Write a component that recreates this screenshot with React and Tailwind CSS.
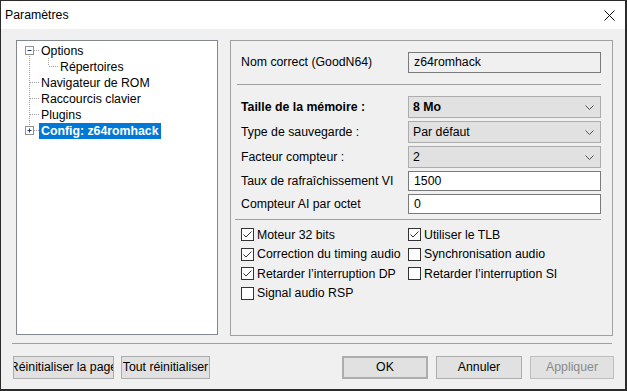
import React from "react";

function Check({ checked }) {
  return (
    <span className="w-[13px] h-[13px] border border-[#333333] bg-white flex items-center justify-center shrink-0">
      {checked && (
        <svg width="11" height="11" viewBox="0 0 11 11">
          <path d="M1.5 5.5 L4 8 L9.5 2.5" fill="none" stroke="#333333" strokeWidth="1" />
        </svg>
      )}
    </span>
  );
}

function CheckItem({ checked, label }) {
  return (
    <div className="flex items-center h-[19.5px]">
      <Check checked={checked} />
      <span className="ml-[3px] whitespace-nowrap">{label}</span>
    </div>
  );
}

function Chevron() {
  return (
    <svg width="9" height="5" viewBox="0 0 9 5" className="shrink-0">
      <polyline points="0.5,0.5 4.5,4.5 8.5,0.5" fill="none" stroke="#505050" strokeWidth="1" />
    </svg>
  );
}

function Select({ value, bold }) {
  return (
    <div className="w-[193px] h-[22px] bg-[#e1e1e1] border border-[#adadad] flex items-center justify-between pl-[4px] pr-[6px]">
      <span className={bold ? "font-bold" : ""}>{value}</span>
      <Chevron />
    </div>
  );
}

function Row({ label, bold, children, className = "" }) {
  return (
    <div className={"flex items-center pl-[10px] " + className}>
      <span className={"w-[167px] whitespace-nowrap " + (bold ? "font-bold" : "")}>{label}</span>
      {children}
    </div>
  );
}

function TextBox({ value, readOnly, h = "h-[20px]" }) {
  return (
    <div
      className={
        "w-[193px] " + h + " border border-[#7a7a7a] flex items-center pl-[5px] " +
        (readOnly ? "bg-[#f0f0f0]" : "bg-white")
      }
    >
      {value}
    </div>
  );
}

function Btn({ children, className = "" }) {
  return (
    <div
      className={
        "h-[23px] flex items-center justify-center overflow-hidden whitespace-nowrap bg-[#e1e1e1] border border-[#adadad] " +
        className
      }
    >
      {children}
    </div>
  );
}

function TreeLines() {
  return (
    <svg className="absolute left-0 top-0" width="200" height="120" viewBox="0 0 200 120">
      <line x1="12.5" y1="15" x2="12.5" y2="85" stroke="#a0a0a0" strokeDasharray="1 1" />
      <line x1="17" y1="9.5" x2="23" y2="9.5" stroke="#a0a0a0" strokeDasharray="1 1" />
      <line x1="13" y1="41.5" x2="23" y2="41.5" stroke="#a0a0a0" strokeDasharray="1 1" />
      <line x1="13" y1="57.5" x2="23" y2="57.5" stroke="#a0a0a0" strokeDasharray="1 1" />
      <line x1="13" y1="73.5" x2="23" y2="73.5" stroke="#a0a0a0" strokeDasharray="1 1" />
      <line x1="17" y1="89.5" x2="23" y2="89.5" stroke="#a0a0a0" strokeDasharray="1 1" />
      <line x1="31.5" y1="17" x2="31.5" y2="25" stroke="#a0a0a0" strokeDasharray="1 1" />
      <line x1="32" y1="25.5" x2="41" y2="25.5" stroke="#a0a0a0" strokeDasharray="1 1" />
      <rect x="8.5" y="5.5" width="8" height="8" fill="white" stroke="#919191" />
      <line x1="10.5" y1="9.5" x2="14.5" y2="9.5" stroke="#1f3d7a" />
      <rect x="8.5" y="85.5" width="8" height="8" fill="white" stroke="#919191" />
      <line x1="10.5" y1="89.5" x2="14.5" y2="89.5" stroke="#1f3d7a" />
      <line x1="12.5" y1="87.5" x2="12.5" y2="91.5" stroke="#1f3d7a" />
    </svg>
  );
}

export default function App() {
  return (
    <div className="w-[627px] h-[391px] bg-[#f0f0f0] border border-[#2b2b2b] border-b-2 border-r-2 flex flex-col font-['Liberation_Sans',sans-serif] text-[12.3px] text-black leading-none overflow-hidden">
      <div className="h-[28px] bg-white flex items-center justify-between pl-[4px] pr-[10px] shrink-0">
        <span>Paramètres</span>
        <svg width="11" height="11" viewBox="0 0 11 11">
          <path d="M0.5 0.5 L10.5 10.5 M10.5 0.5 L0.5 10.5" stroke="#111" strokeWidth="1" />
        </svg>
      </div>

      <div className="flex pl-[15px] mt-[11px] gap-[12px]">
        <div className="w-[202px] h-[295px] bg-white border border-[#828790] relative">
          <TreeLines />
          <div className="flex flex-col pt-[2px] relative">
            <div className="h-[16px] flex items-center pl-[24px]">Options</div>
            <div className="h-[16px] flex items-center pl-[43px]">Répertoires</div>
            <div className="h-[16px] flex items-center pl-[24px]">Navigateur de ROM</div>
            <div className="h-[16px] flex items-center pl-[24px]">Raccourcis clavier</div>
            <div className="h-[16px] flex items-center pl-[24px]">Plugins</div>
            <div className="h-[16px] flex items-center pl-[22px]">
              <span className="h-[16px] flex items-center bg-[#0078d7] text-white font-bold px-[2px]">
                Config: z64romhack
              </span>
            </div>
          </div>
        </div>

        <div className="w-[383px] h-[296px] border border-[#a0a0a0] flex flex-col">
          <Row label="Nom correct (GoodN64)" className="mt-[11px]">
            <TextBox value="z64romhack" readOnly h="h-[21px]" />
          </Row>
          <div className="ml-[6px] w-[364px] h-px bg-[#a0a0a0] mt-[11px]" />
          <Row label="Taille de la mémoire :" bold className="mt-[11px]">
            <Select value="8 Mo" bold />
          </Row>
          <Row label="Type de sauvegarde :" className="mt-[3px]">
            <Select value="Par défaut" />
          </Row>
          <Row label="Facteur compteur :" className="mt-[3px]">
            <Select value="2" />
          </Row>
          <Row label="Taux de rafraîchissement VI" className="mt-[3px]">
            <TextBox value="1500" />
          </Row>
          <Row label="Compteur AI par octet" className="mt-[3px]">
            <TextBox value="0" />
          </Row>
          <div className="ml-[4px] w-[366px] h-px bg-[#a0a0a0] mt-[5px]" />
          <div className="grid grid-cols-[167px_1fr] pl-[10px] mt-[5px]">
            <CheckItem checked label="Moteur 32 bits" />
            <CheckItem checked label="Utiliser le TLB" />
            <CheckItem checked label="Correction du timing audio" />
            <CheckItem label="Synchronisation audio" />
            <CheckItem checked label="Retarder l’interruption DP" />
            <CheckItem label="Retarder l’interruption SI" />
            <CheckItem label="Signal audio RSP" />
          </div>
        </div>
      </div>

      <div className="ml-[11px] w-[600px] h-px bg-[#a0a0a0] mt-[7px]" />

      <div className="flex items-center mt-[12px] pl-[12px]">
        <Btn className="w-[101px]">Réinitialiser la page</Btn>
        <Btn className="w-[89px] ml-[7px]">Tout réinitialiser</Btn>
        <Btn className="w-[86px] ml-[132px] border-2 border-[#0078d7]">OK</Btn>
        <Btn className="w-[86px] ml-[8px]">Annuler</Btn>
        <Btn className="w-[84px] ml-[8px] bg-[#cccccc] border-[#bfbfbf] text-[#8a8a8a]">Appliquer</Btn>
      </div>
    </div>
  );
}
